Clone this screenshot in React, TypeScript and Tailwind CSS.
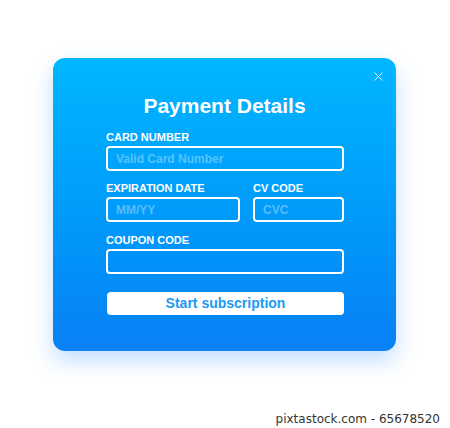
import { X } from "lucide-react";

const font = { fontFamily: '"Liberation Sans", Arial, sans-serif' };

function Label({ children }: { children: React.ReactNode }) {
  return (
    <div className="text-[11px] leading-[14px] font-bold text-white">
      {children}
    </div>
  );
}

function Field({ placeholder, className }: { placeholder?: string; className?: string }) {
  return (
    <input
      placeholder={placeholder}
      className={`h-[25px] rounded-[4px] border-2 border-white bg-transparent px-[8px] text-[12px] font-bold text-white placeholder:text-white/35 outline-none ${className ?? ""}`}
    />
  );
}

export default function App() {
  return (
    <div className="w-[450px] h-[428px] bg-white overflow-hidden" style={font}>
      <div className="relative ml-[53px] mt-[58px] w-[343px] h-[293px] rounded-[12px] bg-gradient-to-b from-[#00b7ff] to-[#0a80f5] shadow-[0_10px_22px_rgba(40,140,255,0.28)] px-[53px] flex flex-col">
        <button className="absolute right-[10px] top-[11px] text-white">
          <X size={15} strokeWidth={1.5} />
        </button>
        <h1 className="mt-[36px] text-center text-[21px] leading-[24px] font-bold text-white">
          Payment Details
        </h1>
        <div className="mt-[12px]">
          <Label>CARD NUMBER</Label>
        </div>
        <Field placeholder="Valid Card Number" className="mt-[2px] w-[238px]" />
        <div className="mt-[10px] flex gap-[13px]">
          <div className="flex flex-col w-[134px]">
            <Label>EXPIRATION DATE</Label>
            <Field placeholder="MM/YY" className="mt-[2px] w-[134px]" />
          </div>
          <div className="flex flex-col w-[91px]">
            <Label>CV CODE</Label>
            <Field placeholder="CVC" className="mt-[2px] w-[91px]" />
          </div>
        </div>
        <div className="mt-[11px]">
          <Label>COUPON CODE</Label>
        </div>
        <Field className="mt-[2px] w-[238px]" />
        <button className="mt-[18px] h-[23px] w-[237px] ml-[1px] rounded-[4px] bg-white text-[14px] font-bold text-[#1a9af6]">
          Start subscription
        </button>
      </div>
      <div className="mt-[60px] pr-[10px] flex justify-end">
        <span
          className="text-[12px] leading-[16px] text-[#333]"
          style={{ fontFamily: '"DejaVu Sans", Verdana, sans-serif' }}
        >
          pixtastock.com - 65678520
        </span>
      </div>
    </div>
  );
}
